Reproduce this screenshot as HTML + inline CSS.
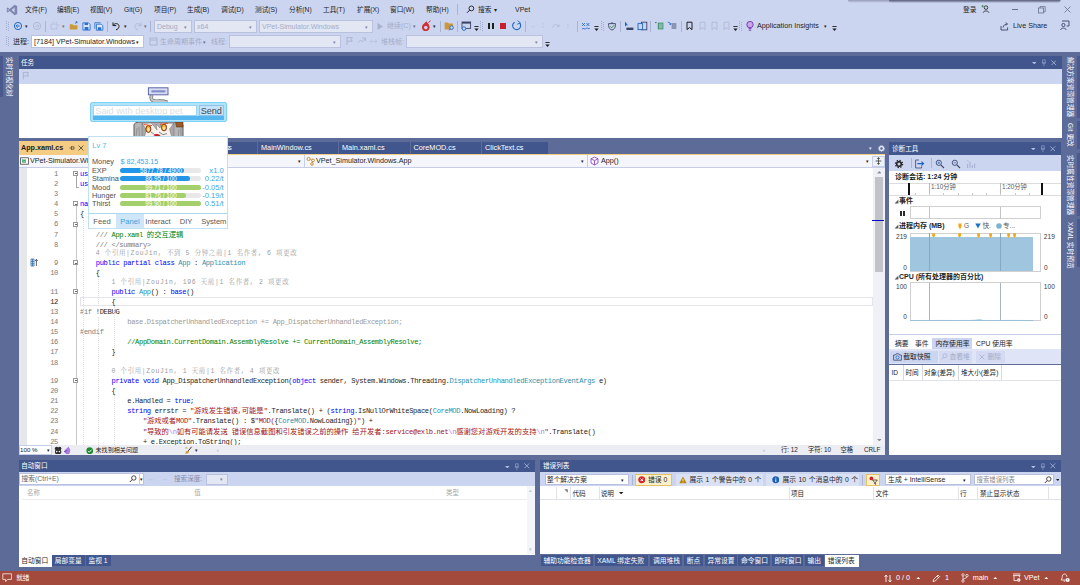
<!DOCTYPE html>
<html lang="zh-CN"><head><meta charset="utf-8"><title>VPet - Microsoft Visual Studio</title>
<style>
html,body{margin:0;padding:0;}
body{width:1080px;height:585px;overflow:hidden;position:relative;background:#5D6B99;font-family:"Liberation Sans","Noto Sans CJK SC",sans-serif;}
#r{position:absolute;left:0;top:0;width:1080px;height:585px;overflow:hidden;}
#r div,#r span,#r svg{position:absolute;}
#r span{white-space:nowrap;}
#r span span{position:static;}
.m{font-family:"Liberation Mono","Noto Sans CJK SC",monospace;}
.cl{font-family:"Liberation Mono","Noto Serif CJK SC",monospace;}
.b{font-weight:bold;}
.c{font-size:7.3px;letter-spacing:0;}
.in{color:#9a9a9a}
.v{writing-mode:vertical-rl;text-orientation:sideways;}
.k{color:#0000ff}.t{color:#2b91af}.g{color:#008000}.s{color:#a31515}.gr{color:#808080}.e{color:#b776fb}
</style></head>
<body><div id="r">
<div style="left:0px;top:0px;width:1080px;height:52px;background:#CCD5F0;"></div>
<svg style="left:6px;top:4px;" width="12" height="12" viewBox="0 0 12 12"><path d="M8.6 0.8 L11.2 2 V10 L8.6 11.2 L3.6 6.9 L1.6 8.5 L0.8 8 V4 L1.6 3.5 L3.6 5.1 Z M8.6 3.6 L5.6 6 L8.6 8.4 Z M1.8 4.9 V7.1 L3 6 Z" fill="#7f87ae" fill-rule="evenodd"/></svg>
<span style="left:25px;top:4.50px;line-height:10px;font-size:6.7px;color:#1e1e1e;">文件(F)</span>
<span style="left:57px;top:4.50px;line-height:10px;font-size:6.7px;color:#1e1e1e;">编辑(E)</span>
<span style="left:90px;top:4.50px;line-height:10px;font-size:6.7px;color:#1e1e1e;">视图(V)</span>
<span style="left:124px;top:4.50px;line-height:10px;font-size:6.7px;color:#1e1e1e;">Git(G)</span>
<span style="left:154px;top:4.50px;line-height:10px;font-size:6.7px;color:#1e1e1e;">项目(P)</span>
<span style="left:187px;top:4.50px;line-height:10px;font-size:6.7px;color:#1e1e1e;">生成(B)</span>
<span style="left:221px;top:4.50px;line-height:10px;font-size:6.7px;color:#1e1e1e;">调试(D)</span>
<span style="left:255px;top:4.50px;line-height:10px;font-size:6.7px;color:#1e1e1e;">测试(S)</span>
<span style="left:289px;top:4.50px;line-height:10px;font-size:6.7px;color:#1e1e1e;">分析(N)</span>
<span style="left:323px;top:4.50px;line-height:10px;font-size:6.7px;color:#1e1e1e;">工具(T)</span>
<span style="left:357px;top:4.50px;line-height:10px;font-size:6.7px;color:#1e1e1e;">扩展(X)</span>
<span style="left:390px;top:4.50px;line-height:10px;font-size:6.7px;color:#1e1e1e;">窗口(W)</span>
<span style="left:426px;top:4.50px;line-height:10px;font-size:6.7px;color:#1e1e1e;">帮助(H)</span>
<div style="left:457px;top:4px;width:1px;height:11px;background:#aab3d3;"></div>
<svg style="left:466px;top:5px;" width="9" height="9" viewBox="0 0 9 9"><circle cx="5.4" cy="3.4" r="2.4" fill="none" stroke="#1e1e1e" stroke-width="0.9"/><path d="M3.7 5.1 L1 7.8" stroke="#1e1e1e" stroke-width="1"/></svg>
<span style="left:478px;top:4.50px;line-height:10px;font-size:6.7px;color:#1e1e1e;">搜索</span>
<span style="left:494px;top:4.50px;line-height:10px;font-size:6px;color:#1e1e1e;">▾</span>
<span style="left:515px;top:4.50px;line-height:10px;font-size:7px;color:#1e1e1e;">VPet</span>
<span style="left:963px;top:4.50px;line-height:10px;font-size:6.7px;color:#1e1e1e;">登录</span>
<svg style="left:981px;top:4px;" width="10" height="10" viewBox="0 0 10 10"><circle cx="5" cy="3.6" r="1.8" fill="none" stroke="#1e1e1e" stroke-width="0.8"/><path d="M2.2 8.6 C2.6 6.4 7.4 6.4 7.8 8.6" fill="none" stroke="#1e1e1e" stroke-width="0.8"/><path d="M1.6 1 V3.4 M0.4 2.2 H2.8" stroke="#2a8a2a" stroke-width="0.7"/></svg>
<div style="left:1012px;top:9px;width:6px;height:1px;background:#6a7088;"></div>
<svg style="left:1038px;top:6px;" width="8" height="8" viewBox="0 0 8 8"><rect x="0.5" y="2" width="5" height="5" fill="none" stroke="#6a7088" stroke-width="0.8"/><path d="M2 2 V0.6 H7.2 V5.8 H5.6" fill="none" stroke="#6a7088" stroke-width="0.8"/></svg>
<svg style="left:1064px;top:6px;" width="7" height="7" viewBox="0 0 7 7"><path d="M0.5 0.5 L6.5 6.5 M6.5 0.5 L0.5 6.5" stroke="#6a7088" stroke-width="0.8"/></svg>
<div style="left:848px;top:0px;width:213px;height:3.4px;background:linear-gradient(to bottom,rgba(70,74,100,0.42),rgba(70,74,100,0));border-radius:0 0 3px 3px;"></div>
<div style="left:889px;top:0px;width:171px;height:3.2px;background:linear-gradient(to bottom,rgba(50,54,80,0.6),rgba(60,64,90,0));border-radius:0 0 3px 3px;"></div>
<div style="left:6px;top:21px;width:1px;height:1px;background:#a3add2;"></div>
<div style="left:7.5px;top:22px;width:1px;height:1px;background:#a3add2;"></div>
<div style="left:6px;top:23px;width:1px;height:1px;background:#a3add2;"></div>
<div style="left:7.5px;top:24px;width:1px;height:1px;background:#a3add2;"></div>
<div style="left:6px;top:25px;width:1px;height:1px;background:#a3add2;"></div>
<div style="left:7.5px;top:26px;width:1px;height:1px;background:#a3add2;"></div>
<div style="left:6px;top:27px;width:1px;height:1px;background:#a3add2;"></div>
<div style="left:7.5px;top:28px;width:1px;height:1px;background:#a3add2;"></div>
<div style="left:6px;top:29px;width:1px;height:1px;background:#a3add2;"></div>
<div style="left:7.5px;top:30px;width:1px;height:1px;background:#a3add2;"></div>
<svg style="left:13px;top:21px;" width="10" height="10" viewBox="0 0 10 10"><circle cx="5" cy="5" r="3.6" fill="none" stroke="#1a66c8" stroke-width="1"/><path d="M6.8 5 H3.4 M4.8 3.4 L3.2 5 L4.8 6.6" fill="none" stroke="#1a66c8" stroke-width="0.9"/></svg>
<span style="left:25px;top:21.00px;line-height:10px;font-size:5px;color:#1e1e1e;">▾</span>
<svg style="left:32px;top:21px;" width="10" height="10" viewBox="0 0 10 10"><circle cx="5" cy="5" r="3.6" fill="none" stroke="#b0b8d6" stroke-width="1"/><path d="M3.2 5 H6.6 M5.2 3.4 L6.8 5 L5.2 6.6" fill="none" stroke="#b0b8d6" stroke-width="0.9"/></svg>
<div style="left:45px;top:21px;width:1px;height:11px;background:#aab3d3;"></div>
<svg style="left:50px;top:21px;" width="12" height="10" viewBox="0 0 12 10"><path d="M1 3 H7 V8 H1 Z M3 2 L4 0.5 M6 2 L7.5 1 M8 4 H10" fill="none" stroke="#b3bbd8" stroke-width="0.9"/></svg>
<span style="left:62px;top:21.00px;line-height:10px;font-size:5px;color:#6a7088;">▾</span>
<svg style="left:69px;top:21px;" width="10" height="10" viewBox="0 0 10 10"><path d="M0.8 8.5 V3.2 H3.4 L4.2 4.2 H8.4 V8.5 Z" fill="#c99a3c"/><path d="M6 2.6 L8 0.8 M8 0.8 H6.6 M8 0.8 V2.2" stroke="#1a66c8" stroke-width="0.8" fill="none"/></svg>
<svg style="left:81.5px;top:21.5px;" width="9" height="9" viewBox="0 0 9 9"><path d="M0.9 0.9 H6.6 L8.1 2.4 V8.1 H0.9 Z" fill="#dfe8fa" stroke="#2a72cc" stroke-width="0.9"/><rect x="2.6" y="0.9" width="3.4" height="2.2" fill="#2a72cc"/><rect x="2.6" y="5" width="3.8" height="3" fill="#2a72cc"/></svg>
<svg style="left:93.5px;top:21.5px;" width="10" height="9" viewBox="0 0 10 9"><path d="M2.4 2.2 H7.4 L8.8 3.6 V8.2 H2.4 Z" fill="#dfe8fa" stroke="#2a72cc" stroke-width="0.9"/><path d="M0.8 6.8 V0.7 H6.6" fill="none" stroke="#2a72cc" stroke-width="0.8"/><rect x="3.8" y="5.2" width="3.4" height="2.8" fill="#2a72cc"/></svg>
<div style="left:107px;top:21px;width:1px;height:11px;background:#aab3d3;"></div>
<svg style="left:111px;top:21px;" width="10" height="10" viewBox="0 0 10 10"><path d="M2 1.4 V4.6 H5.2" fill="none" stroke="#1e1e1e" stroke-width="1"/><path d="M2.2 4.4 C3.6 1.6 8.4 2.2 8 5.6 C7.8 7.4 6.6 8.4 5 8.8" fill="none" stroke="#1e1e1e" stroke-width="1"/></svg>
<span style="left:124px;top:21.00px;line-height:10px;font-size:5px;color:#1e1e1e;">▾</span>
<svg style="left:133px;top:21px;" width="10" height="10" viewBox="0 0 10 10"><path d="M8 1.4 V4.6 H4.8" fill="none" stroke="#b3bbd8" stroke-width="1"/><path d="M7.8 4.4 C6.4 1.6 1.6 2.2 2 5.6 C2.2 7.4 3.4 8.4 5 8.8" fill="none" stroke="#b3bbd8" stroke-width="1"/></svg>
<span style="left:144px;top:21.00px;line-height:10px;font-size:5px;color:#6a7088;">▾</span>
<div style="left:150px;top:21px;width:1px;height:11px;background:#aab3d3;"></div>
<div style="left:154px;top:20px;width:38px;height:13px;background:#e3e7f4;border:1px solid #b9c1de;box-sizing:border-box;"></div>
<span style="left:157px;top:21.50px;line-height:10px;font-size:7px;color:#a4acc4;">Debug</span>
<span style="left:184px;top:21.50px;line-height:10px;font-size:5px;color:#8088a4;">▾</span>
<div style="left:194px;top:20px;width:63px;height:13px;background:#e3e7f4;border:1px solid #b9c1de;box-sizing:border-box;"></div>
<span style="left:197px;top:21.50px;line-height:10px;font-size:7px;color:#a4acc4;">x64</span>
<span style="left:249px;top:21.50px;line-height:10px;font-size:5px;color:#8088a4;">▾</span>
<div style="left:259px;top:20px;width:114px;height:13px;background:#e3e7f4;border:1px solid #b9c1de;box-sizing:border-box;"></div>
<span style="left:262px;top:21.50px;line-height:10px;font-size:7px;color:#a4acc4;">VPet-Simulator.Windows</span>
<span style="left:365px;top:21.50px;line-height:10px;font-size:5px;color:#8088a4;">▾</span>
<svg style="left:376px;top:22px;" width="8" height="9" viewBox="0 0 8 9"><path d="M1.5 1 L7 4.5 L1.5 8 Z" fill="#a9b1cd"/></svg>
<span style="left:387px;top:21.00px;line-height:10px;font-size:7px;color:#a4acc4;">继续(C)</span>
<span style="left:413px;top:21.00px;line-height:10px;font-size:5px;color:#6a7088;">▾</span>
<svg style="left:420px;top:20px;" width="12" height="12" viewBox="0 0 12 12"><path d="M2 7.4 C2 4 5 3.6 6.4 1 C6.8 3 9.8 4.2 9.6 7.4 C9.4 10 7.4 11 5.8 11 C3.8 11 2 9.8 2 7.4 Z" fill="#d12f2f"/><circle cx="5.8" cy="7.6" r="1.8" fill="#CCD5F0"/><path d="M8.4 2.6 L10.6 0.8" stroke="#d12f2f" stroke-width="1"/></svg>
<span style="left:433px;top:21.00px;line-height:10px;font-size:5px;color:#1e1e1e;">▾</span>
<div style="left:440px;top:21px;width:1px;height:11px;background:#aab3d3;"></div>
<svg style="left:444px;top:21px;" width="11" height="10" viewBox="0 0 11 10"><path d="M0.6 8.4 V1.6 H4 L4.8 2.6 H9 V8.4 Z" fill="#c99a3c"/><circle cx="7.6" cy="6.6" r="1.8" fill="#CCD5F0" stroke="#1a66c8" stroke-width="0.9"/><path d="M6.2 8 L5 9.4" stroke="#1a66c8" stroke-width="0.9"/></svg>
<div style="left:457px;top:21px;width:1px;height:11px;background:#aab3d3;"></div>
<svg style="left:461px;top:21px;" width="11" height="10" viewBox="0 0 11 10"><rect x="1" y="1" width="8.6" height="6.4" fill="none" stroke="#3b4468" stroke-width="0.9"/><rect x="1" y="1" width="8.6" height="1.6" fill="#3b4468"/><circle cx="3" cy="7.6" r="1.8" fill="#CCD5F0" stroke="#1a66c8" stroke-width="0.9"/></svg>
<svg style="left:474px;top:26px;" width="5" height="6" viewBox="0 0 5 6"><path d="M0.4 0.5 H4.6" stroke="#1e1e1e" stroke-width="0.9"/><path d="M0.3 2.6 H4.7 L2.5 5 Z" fill="#1e1e1e"/></svg>
<div style="left:480px;top:21px;width:1px;height:1px;background:#a3add2;"></div>
<div style="left:481.5px;top:22px;width:1px;height:1px;background:#a3add2;"></div>
<div style="left:480px;top:23px;width:1px;height:1px;background:#a3add2;"></div>
<div style="left:481.5px;top:24px;width:1px;height:1px;background:#a3add2;"></div>
<div style="left:480px;top:25px;width:1px;height:1px;background:#a3add2;"></div>
<div style="left:481.5px;top:26px;width:1px;height:1px;background:#a3add2;"></div>
<div style="left:480px;top:27px;width:1px;height:1px;background:#a3add2;"></div>
<div style="left:481.5px;top:28px;width:1px;height:1px;background:#a3add2;"></div>
<div style="left:480px;top:29px;width:1px;height:1px;background:#a3add2;"></div>
<div style="left:481.5px;top:30px;width:1px;height:1px;background:#a3add2;"></div>
<div style="left:488px;top:23.2px;width:1.7px;height:6px;background:#1e1e1e;"></div>
<div style="left:492px;top:23.2px;width:1.7px;height:6px;background:#1e1e1e;"></div>
<div style="left:500px;top:23.3px;width:6.4px;height:6.2px;background:#c8202c;"></div>
<svg style="left:511px;top:20px;" width="11" height="11" viewBox="0 0 11 11"><path d="M8.8 3.2 A4 4 0 1 1 3.6 2.2" fill="none" stroke="#1a66c8" stroke-width="1.1"/><path d="M6.6 0.6 L9.4 3 L6.2 4.2" fill="none" stroke="#1a66c8" stroke-width="0.9"/></svg>
<div style="left:525px;top:21px;width:1px;height:11px;background:#aab3d3;"></div>
<span style="left:529px;top:21.00px;line-height:10px;font-size:7px;color:#b3bbd8;">→</span>
<span style="left:542px;top:21.00px;line-height:10px;font-size:7px;color:#b3bbd8;">⁞</span>
<svg style="left:551px;top:21px;" width="10" height="10" viewBox="0 0 10 10"><path d="M1.6 6.6 C2 3 7 2.6 8 5.6 M8 5.6 L8.4 3.6 M8 5.6 L6 5.2" fill="none" stroke="#b3bbd8" stroke-width="0.9"/></svg>
<span style="left:566px;top:21.00px;line-height:10px;font-size:7px;color:#b3bbd8;">↕</span>
<div style="left:577px;top:21px;width:1px;height:11px;background:#aab3d3;"></div>
<svg style="left:581px;top:21px;" width="10" height="10" viewBox="0 0 10 10"><path d="M1 2 L4 5 M4 2 L1 5 M5.4 2 L8.4 5 M8.4 2 L5.4 5" stroke="#1a66c8" stroke-width="0.8"/><path d="M1 8 C2.4 6.2 3.8 9.2 5.2 7.4 C6.4 6 7.6 8.8 8.8 7.4" fill="none" stroke="#1a66c8" stroke-width="0.8"/></svg>
<svg style="left:594px;top:26px;" width="5" height="6" viewBox="0 0 5 6"><path d="M0.4 0.5 H4.6" stroke="#1e1e1e" stroke-width="0.9"/><path d="M0.3 2.6 H4.7 L2.5 5 Z" fill="#1e1e1e"/></svg>
<div style="left:601px;top:21px;width:1px;height:1px;background:#a3add2;"></div>
<div style="left:602.5px;top:22px;width:1px;height:1px;background:#a3add2;"></div>
<div style="left:601px;top:23px;width:1px;height:1px;background:#a3add2;"></div>
<div style="left:602.5px;top:24px;width:1px;height:1px;background:#a3add2;"></div>
<div style="left:601px;top:25px;width:1px;height:1px;background:#a3add2;"></div>
<div style="left:602.5px;top:26px;width:1px;height:1px;background:#a3add2;"></div>
<div style="left:601px;top:27px;width:1px;height:1px;background:#a3add2;"></div>
<div style="left:602.5px;top:28px;width:1px;height:1px;background:#a3add2;"></div>
<div style="left:601px;top:29px;width:1px;height:1px;background:#a3add2;"></div>
<div style="left:602.5px;top:30px;width:1px;height:1px;background:#a3add2;"></div>
<svg style="left:607px;top:21px;" width="10" height="10" viewBox="0 0 10 10"><path d="M1.6 2.6 H8.4 V4.4 C8.4 7 6.6 8.6 5 9 C3.4 8.6 1.6 7 1.6 4.4 Z" fill="none" stroke="#3b4468" stroke-width="0.9"/><path d="M3.4 5.4 L4.8 6.8 L7 4.2" fill="none" stroke="#2a8a2a" stroke-width="0.9"/><path d="M5 1 V2.6" stroke="#3b4468" stroke-width="0.9"/></svg>
<div style="left:620px;top:21px;width:1px;height:11px;background:#aab3d3;"></div>
<svg style="left:624px;top:21px;" width="11" height="10" viewBox="0 0 11 10"><path d="M1 0.6 L4 4.2 L2.4 4.2 L1 5.6 Z" fill="#1a66c8"/><rect x="2.4" y="6.6" width="7" height="2.4" fill="#3b4468"/></svg>
<svg style="left:637px;top:21px;" width="11" height="10" viewBox="0 0 11 10"><rect x="4.4" y="1.2" width="5.4" height="7.6" fill="none" stroke="#3b4468" stroke-width="0.9"/><rect x="1" y="2.6" width="4.6" height="6" fill="#CCD5F0" stroke="#1a66c8" stroke-width="0.9"/></svg>
<div style="left:650px;top:21px;width:1px;height:11px;background:#aab3d3;"></div>
<svg style="left:654px;top:21px;" width="11" height="10" viewBox="0 0 11 10"><path d="M3.6 3 H9 M3.6 5 H9 M3.6 7 H9" stroke="#2f8f5b" stroke-width="0.9"/><path d="M1 1.6 H2.6" stroke="#3b4468" stroke-width="0.8"/><rect x="4.4" y="2" width="4.6" height="6" fill="none" stroke="#2f8f5b" stroke-width="0.7"/></svg>
<svg style="left:667px;top:21px;" width="11" height="10" viewBox="0 0 11 10"><path d="M4.6 3 H9.4 M4.6 5 H9.4 M4.6 7 H9.4" stroke="#3b4468" stroke-width="0.9"/><path d="M0.8 1.4 C2.4 1 3.6 2 3.6 3.6 M3.6 3.6 L2.2 3 M3.6 3.6 L4 2.2" fill="none" stroke="#1a66c8" stroke-width="0.8"/></svg>
<div style="left:681px;top:21px;width:1px;height:11px;background:#aab3d3;"></div>
<svg style="left:685px;top:21px;" width="9" height="10" viewBox="0 0 9 10"><path d="M2 1.2 H7 V8.6 L4.5 6.6 L2 8.6 Z" fill="none" stroke="#1e1e1e" stroke-width="1"/></svg>
<svg style="left:698px;top:21px;" width="9" height="10" viewBox="0 0 9 10"><path d="M2 1.2 H7 V8.6 L4.5 6.6 L2 8.6 Z" fill="none" stroke="#b3bbd8" stroke-width="1"/></svg>
<svg style="left:710px;top:21px;" width="9" height="10" viewBox="0 0 9 10"><path d="M2 1.2 H7 V8.6 L4.5 6.6 L2 8.6 Z" fill="none" stroke="#b3bbd8" stroke-width="1"/></svg>
<svg style="left:722px;top:21px;" width="9" height="10" viewBox="0 0 9 10"><path d="M2 1.2 H7 V8.6 L4.5 6.6 L2 8.6 Z" fill="none" stroke="#b3bbd8" stroke-width="1"/></svg>
<svg style="left:733px;top:26px;" width="5" height="6" viewBox="0 0 5 6"><path d="M0.4 0.5 H4.6" stroke="#1e1e1e" stroke-width="0.9"/><path d="M0.3 2.6 H4.7 L2.5 5 Z" fill="#1e1e1e"/></svg>
<div style="left:739px;top:21px;width:1px;height:1px;background:#a3add2;"></div>
<div style="left:740.5px;top:22px;width:1px;height:1px;background:#a3add2;"></div>
<div style="left:739px;top:23px;width:1px;height:1px;background:#a3add2;"></div>
<div style="left:740.5px;top:24px;width:1px;height:1px;background:#a3add2;"></div>
<div style="left:739px;top:25px;width:1px;height:1px;background:#a3add2;"></div>
<div style="left:740.5px;top:26px;width:1px;height:1px;background:#a3add2;"></div>
<div style="left:739px;top:27px;width:1px;height:1px;background:#a3add2;"></div>
<div style="left:740.5px;top:28px;width:1px;height:1px;background:#a3add2;"></div>
<div style="left:739px;top:29px;width:1px;height:1px;background:#a3add2;"></div>
<div style="left:740.5px;top:30px;width:1px;height:1px;background:#a3add2;"></div>
<svg style="left:745px;top:20px;" width="10" height="12" viewBox="0 0 10 12"><circle cx="5" cy="4.6" r="3.2" fill="#c9a6e8" stroke="#7a3fb0" stroke-width="1"/><path d="M3.6 8.6 H6.4 M3.8 10.2 H6.2" stroke="#7a3fb0" stroke-width="1"/></svg>
<span style="left:757px;top:21.00px;line-height:10px;font-size:7.2px;color:#1e1e1e;">Application Insights</span>
<span style="left:824px;top:21.00px;line-height:10px;font-size:5px;color:#1e1e1e;">▾</span>
<svg style="left:832px;top:26px;" width="5" height="6" viewBox="0 0 5 6"><path d="M0.4 0.5 H4.6" stroke="#1e1e1e" stroke-width="0.9"/><path d="M0.3 2.6 H4.7 L2.5 5 Z" fill="#1e1e1e"/></svg>
<svg style="left:1000px;top:21px;" width="10" height="10" viewBox="0 0 10 10"><path d="M1 5 V9 H7.6 V6.4" fill="none" stroke="#3b4468" stroke-width="0.9"/><path d="M3 6.6 C3.4 4 5.4 3 7.4 3 M7.4 3 L5.8 1.4 M7.4 3 L5.8 4.6" fill="none" stroke="#3b4468" stroke-width="0.9"/></svg>
<span style="left:1013px;top:21.00px;line-height:10px;font-size:7.2px;color:#1e1e1e;">Live Share</span>
<svg style="left:1059px;top:20px;" width="11" height="11" viewBox="0 0 11 11"><path d="M3 1 H10 V6 H7.6" fill="none" stroke="#3b4468" stroke-width="0.9"/><circle cx="4.4" cy="5" r="1.6" fill="none" stroke="#3b4468" stroke-width="0.9"/><path d="M1.6 10 C2 7.4 6.8 7.4 7.2 10" fill="none" stroke="#3b4468" stroke-width="0.9"/></svg>
<div style="left:6px;top:36px;width:1px;height:1px;background:#a3add2;"></div>
<div style="left:7.5px;top:37px;width:1px;height:1px;background:#a3add2;"></div>
<div style="left:6px;top:38px;width:1px;height:1px;background:#a3add2;"></div>
<div style="left:7.5px;top:39px;width:1px;height:1px;background:#a3add2;"></div>
<div style="left:6px;top:40px;width:1px;height:1px;background:#a3add2;"></div>
<div style="left:7.5px;top:41px;width:1px;height:1px;background:#a3add2;"></div>
<div style="left:6px;top:42px;width:1px;height:1px;background:#a3add2;"></div>
<div style="left:7.5px;top:43px;width:1px;height:1px;background:#a3add2;"></div>
<div style="left:6px;top:44px;width:1px;height:1px;background:#a3add2;"></div>
<div style="left:7.5px;top:45px;width:1px;height:1px;background:#a3add2;"></div>
<span style="left:13px;top:36.50px;line-height:10px;font-size:7px;color:#1e1e1e;">进程:</span>
<div style="left:31px;top:35px;width:113px;height:13px;background:#fff;border:1px solid #b9c1de;box-sizing:border-box;"></div>
<span style="left:34px;top:36.50px;line-height:10px;font-size:7.2px;color:#1e1e1e;">[7184] VPet-Simulator.Windows</span>
<span style="left:136px;top:36.50px;line-height:10px;font-size:5px;color:#1e1e1e;">▾</span>
<svg style="left:149px;top:37px;" width="9" height="9" viewBox="0 0 9 9"><rect x="1" y="1" width="7" height="7" fill="none" stroke="#a9b1cd" stroke-width="0.9"/><path d="M1 3 H8" stroke="#a9b1cd" stroke-width="0.9"/></svg>
<span style="left:160px;top:36.50px;line-height:10px;font-size:7px;color:#a4acc4;">生命周期事件</span>
<span style="left:203px;top:36.50px;line-height:10px;font-size:5px;color:#6a7088;">▾</span>
<span style="left:211px;top:36.50px;line-height:10px;font-size:7px;color:#a4acc4;">线程:</span>
<div style="left:229px;top:35px;width:112px;height:13px;background:#e3e7f4;border:1px solid #b9c1de;box-sizing:border-box;"></div>
<span style="left:333px;top:36.50px;line-height:10px;font-size:5px;color:#8088a4;">▾</span>
<svg style="left:345px;top:36px;" width="9" height="10" viewBox="0 0 9 10"><path d="M2 1 V9 M2 1.6 H7.4 L6 3.4 L7.4 5.2 H2" fill="none" stroke="#a9b1cd" stroke-width="0.9"/></svg>
<svg style="left:357px;top:36px;" width="10" height="10" viewBox="0 0 10 10"><path d="M1 6.6 L3.4 4.2 L5 5.8 L7.6 3 M5.4 2 H8.4 V5" fill="none" stroke="#a9b1cd" stroke-width="0.9"/></svg>
<svg style="left:369px;top:37px;" width="9" height="9" viewBox="0 0 9 9"><path d="M1 4.5 H8 M3 2.6 L1 4.5 L3 6.4 M6 2.6 L8 4.5 L6 6.4" fill="none" stroke="#b9c1de" stroke-width="0.8"/></svg>
<span style="left:381px;top:36.50px;line-height:10px;font-size:7px;color:#a4acc4;">堆栈帧:</span>
<div style="left:406px;top:35px;width:137px;height:13px;background:#e3e7f4;border:1px solid #b9c1de;box-sizing:border-box;"></div>
<span style="left:535px;top:36.50px;line-height:10px;font-size:5px;color:#8088a4;">▾</span>
<svg style="left:545px;top:41.5px;" width="5" height="6" viewBox="0 0 5 6"><path d="M0.4 0.5 H4.6" stroke="#1e1e1e" stroke-width="0.9"/><path d="M0.3 2.6 H4.7 L2.5 5 Z" fill="#1e1e1e"/></svg>
<div style="left:0px;top:52px;width:1080px;height:518px;background:#5D6B99;"></div>
<div style="left:0px;top:56px;width:3.3px;height:41px;background:#4a5a8e;"></div>
<span class="v" style="left:5px;top:-5.00px;line-height:10px;font-size:6.7px;color:#fff;top:56.5px;line-height:9px;letter-spacing:-0.15px;">实时可视化树</span>
<div style="left:1076.5px;top:56px;width:3.5px;height:62px;background:#4a5a8e;"></div>
<span class="v" style="left:1066px;top:-5.00px;line-height:10px;font-size:6.7px;color:#fff;top:56.5px;line-height:9px;">解决方案资源管理器</span>
<div style="left:1076.5px;top:121px;width:3.5px;height:28px;background:#4a5a8e;"></div>
<span class="v" style="left:1066px;top:-5.00px;line-height:10px;font-size:6.7px;color:#fff;top:123px;line-height:9px;">Git 更改</span>
<div style="left:1076.5px;top:152.5px;width:3.5px;height:63px;background:#4a5a8e;"></div>
<span class="v" style="left:1066px;top:-5.00px;line-height:10px;font-size:6.7px;color:#fff;top:154.5px;line-height:9px;">实时属性资源管理器</span>
<div style="left:1076.5px;top:219px;width:3.5px;height:48px;background:#4a5a8e;"></div>
<span class="v" style="left:1066px;top:-5.00px;line-height:10px;font-size:6.7px;color:#fff;top:221.5px;line-height:9px;">XAML 实时预览</span>
<div style="left:18.5px;top:56px;width:1043px;height:13px;background:#40568D;"></div>
<span style="left:21px;top:57.50px;line-height:10px;font-size:6.6px;color:#fff;">任务</span>
<svg style="left:1031.9px;top:61.9px;" width="4.6" height="2.4" viewBox="0 0 4.6 2.4"><path d="M0 0 H4.6 L2.3 2.4 Z" fill="#b4bedf"/></svg>
<svg style="left:1040.5px;top:58.9px;" width="6" height="8" viewBox="0 0 6 8"><path d="M1.6 0.8 H4.2 V4 H1.6 Z M0.8 4 H5 M2.9 4 V7.2" fill="none" stroke="#94a1cc" stroke-width="0.7"/></svg>
<svg style="left:1050.9px;top:59.6px;" width="5.6" height="5.6" viewBox="0 0 5.6 5.6"><path d="M0.4 0.4 L5.2 5.2 M5.2 0.4 L0.4 5.2" stroke="#b4bedf" stroke-width="0.75"/></svg>
<div style="left:18.5px;top:69px;width:1043px;height:14.5px;background:#CCD5F0;"></div>
<svg style="left:22px;top:71px;" width="8" height="9" viewBox="0 0 8 9"><path d="M1.4 1 V8.4 M1.4 1.4 H6.6 L5.4 3.2 L6.6 5 H1.4" fill="none" stroke="#a9b1cd" stroke-width="0.9"/></svg>
<div style="left:18.5px;top:83.5px;width:1043px;height:54px;background:#fff;"></div>
<div style="left:18.5px;top:141px;width:69.5px;height:14px;background:#F5CC84;"></div>
<span class="b" style="left:21px;top:143.00px;line-height:10px;font-size:7.2px;color:#1e1e1e;">App.xaml.cs</span>
<svg style="left:69px;top:145px;" width="6" height="7" viewBox="0 0 6 7"><path d="M0.5 3 H2.4 M2.4 1.2 V4.8 M2.4 1.8 H5 V4.2 H2.4" fill="none" stroke="#3b3b3b" stroke-width="0.7"/></svg>
<svg style="left:78px;top:145px;" width="6" height="6" viewBox="0 0 6 6"><path d="M0.6 0.6 L5.4 5.4 M5.4 0.6 L0.6 5.4" stroke="#3b3b3b" stroke-width="0.8"/></svg>
<div style="left:88px;top:142px;width:70px;height:12px;background:#40568D;"></div>
<span style="left:91px;top:143.00px;line-height:10px;font-size:7.3px;color:#fff;">winSetting.xaml.cs</span>
<div style="left:159px;top:142px;width:98px;height:12px;background:#40568D;"></div>
<span style="left:162px;top:143.00px;line-height:10px;font-size:7.3px;color:#fff;">MessageBar.xaml.cs</span>
<span style="left:228.3px;top:143.00px;line-height:10px;font-size:7px;color:#fff;">s</span>
<div style="left:258px;top:142px;width:80px;height:12px;background:#40568D;"></div>
<span style="left:261px;top:143.00px;line-height:10px;font-size:7.3px;color:#fff;">MainWindow.cs</span>
<div style="left:339px;top:142px;width:70.5px;height:12px;background:#40568D;"></div>
<span style="left:342px;top:143.00px;line-height:10px;font-size:7.3px;color:#fff;">Main.xaml.cs</span>
<div style="left:410.5px;top:142px;width:70.5px;height:12px;background:#40568D;"></div>
<span style="left:413.5px;top:143.00px;line-height:10px;font-size:7.3px;color:#fff;">CoreMOD.cs</span>
<div style="left:482px;top:142px;width:66px;height:12px;background:#40568D;"></div>
<span style="left:485px;top:143.00px;line-height:10px;font-size:7.3px;color:#fff;">ClickText.cs</span>
<span style="left:869px;top:143.00px;line-height:10px;font-size:5px;color:#dfe4f4;">▾</span>
<svg style="left:878px;top:145px;" width="7" height="7" viewBox="0 0 7 7"><circle cx="3.5" cy="3.5" r="2" fill="none" stroke="#dfe4f4" stroke-width="1.4"/><circle cx="3.5" cy="3.5" r="3" fill="none" stroke="#dfe4f4" stroke-width="0.8" stroke-dasharray="1 1"/></svg>
<div style="left:18.5px;top:154px;width:866.5px;height:1px;background:#F5CC84;"></div>
<div style="left:18.5px;top:155px;width:866.5px;height:12.5px;background:#f4f6fc;"></div>
<div style="left:18.5px;top:167px;width:866.5px;height:1px;background:#c5cde8;"></div>
<svg style="left:20px;top:157px;" width="9" height="8" viewBox="0 0 9 8"><rect x="0.6" y="0.8" width="7.8" height="6.4" fill="#fff" stroke="#4a4a4a" stroke-width="0.8"/><rect x="2" y="2.4" width="4" height="3.2" fill="#3c9a4c"/><text x="2.4" y="5.4" font-size="3.4" fill="#fff" font-family="Liberation Sans,sans-serif">C#</text></svg>
<span style="left:30px;top:156.00px;line-height:10px;font-size:7.2px;color:#1e1e1e;">VPet-Simulator.Windows</span>
<span style="left:298px;top:156.00px;line-height:10px;font-size:5px;color:#1e1e1e;">▾</span>
<div style="left:304px;top:155px;width:1px;height:12px;background:#c5cde8;"></div>
<svg style="left:306px;top:156px;" width="10" height="10" viewBox="0 0 10 10"><circle cx="2.6" cy="3" r="1.6" fill="none" stroke="#c08a1e" stroke-width="0.9"/><circle cx="7" cy="4.4" r="1.4" fill="none" stroke="#c08a1e" stroke-width="0.9"/><circle cx="6" cy="8" r="1.3" fill="none" stroke="#c08a1e" stroke-width="0.9"/><path d="M4 3.4 L5.6 4 M6.6 5.8 L6.2 6.8" stroke="#c08a1e" stroke-width="0.8"/></svg>
<span style="left:316px;top:156.00px;line-height:10px;font-size:7.2px;color:#1e1e1e;">VPet_Simulator.Windows.App</span>
<span style="left:581px;top:156.00px;line-height:10px;font-size:5px;color:#1e1e1e;">▾</span>
<div style="left:587px;top:155px;width:1px;height:12px;background:#c5cde8;"></div>
<svg style="left:590px;top:156px;" width="9" height="10" viewBox="0 0 9 10"><path d="M4.5 1 L8 2.8 V7 L4.5 9 L1 7 V2.8 Z M1 2.8 L4.5 4.6 L8 2.8 M4.5 4.6 V9" fill="none" stroke="#8a3fc0" stroke-width="0.8"/></svg>
<span style="left:601px;top:156.00px;line-height:10px;font-size:7.2px;color:#1e1e1e;">App()</span>
<span style="left:866px;top:156.00px;line-height:10px;font-size:5px;color:#1e1e1e;">▾</span>
<div style="left:871.5px;top:155.5px;width:13px;height:11.5px;background:#eef1fa;border:1px solid #c5cde8;box-sizing:border-box;"></div>
<svg style="left:875px;top:157px;" width="7" height="8" viewBox="0 0 7 8"><path d="M3.5 0.6 V7.4 M0.6 4 H6.4 M2.2 2 L3.5 0.6 L4.8 2 M2.2 6 L3.5 7.4 L4.8 6" fill="none" stroke="#3b3b3b" stroke-width="0.8"/></svg>
<div style="left:18.5px;top:168px;width:866.5px;height:276.5px;background:#fff;"></div>
<div style="left:18.5px;top:168px;width:8.5px;height:277px;background:#e6e7e8;"></div>
<div style="left:75.6px;top:176px;width:0.8px;height:12px;background:#a8a8a8;"></div>
<div style="left:75.6px;top:187.4px;width:3.4px;height:0.8px;background:#a8a8a8;"></div>
<div style="left:75.6px;top:206px;width:0.8px;height:239px;background:#c8c8c8;"></div>
<div style="left:80px;top:296.6px;width:793px;height:9.6px;background:#fff;border:1px solid #e4e4ec;box-sizing:border-box;"></div>
<div style="left:873px;top:168px;width:12px;height:276.5px;background:#f0f1f6;"></div>
<div style="left:875px;top:177px;width:8px;height:94.5px;background:#c2c3c9;"></div>
<svg style="left:876.7px;top:171.3px;" width="4.6" height="2.4" viewBox="0 0 4.6 2.4"><path d="M0 2.4 L2.3 0 L4.6 2.4 Z" fill="#8a8e9c"/></svg>
<svg style="left:876.7px;top:438.6px;" width="4.6" height="2.4" viewBox="0 0 4.6 2.4"><path d="M0 0 H4.6 L2.3 2.4 Z" fill="#8a8e9c"/></svg>
<div style="left:872px;top:219.5px;width:12px;height:1px;background:#0000cd;"></div>
<span class="m" style="left:28px;width:30px;text-align:right;top:168.80px;line-height:10px;font-size:7.1px;letter-spacing:-0.326px;color:#7a7a7a;">1</span>
<span class="m" style="left:28px;width:30px;text-align:right;top:178.93px;line-height:10px;font-size:7.1px;letter-spacing:-0.326px;color:#7a7a7a;">2</span>
<span class="m" style="left:28px;width:30px;text-align:right;top:189.05px;line-height:10px;font-size:7.1px;letter-spacing:-0.326px;color:#7a7a7a;">3</span>
<span class="m" style="left:28px;width:30px;text-align:right;top:199.18px;line-height:10px;font-size:7.1px;letter-spacing:-0.326px;color:#7a7a7a;">4</span>
<span class="m" style="left:28px;width:30px;text-align:right;top:209.30px;line-height:10px;font-size:7.1px;letter-spacing:-0.326px;color:#7a7a7a;">5</span>
<span class="m" style="left:28px;width:30px;text-align:right;top:219.43px;line-height:10px;font-size:7.1px;letter-spacing:-0.326px;color:#7a7a7a;">6</span>
<span class="m" style="left:28px;width:30px;text-align:right;top:229.55px;line-height:10px;font-size:7.1px;letter-spacing:-0.326px;color:#7a7a7a;">7</span>
<span class="m" style="left:28px;width:30px;text-align:right;top:239.68px;line-height:10px;font-size:7.1px;letter-spacing:-0.326px;color:#7a7a7a;">8</span>
<span class="m" style="left:28px;width:30px;text-align:right;top:258.10px;line-height:10px;font-size:7.1px;letter-spacing:-0.326px;color:#7a7a7a;">9</span>
<span class="m" style="left:28px;width:30px;text-align:right;top:268.23px;line-height:10px;font-size:7.1px;letter-spacing:-0.326px;color:#7a7a7a;">10</span>
<span class="m" style="left:28px;width:30px;text-align:right;top:286.65px;line-height:10px;font-size:7.1px;letter-spacing:-0.326px;color:#7a7a7a;">11</span>
<span class="m" style="left:28px;width:30px;text-align:right;top:296.78px;line-height:10px;font-size:7.1px;letter-spacing:-0.326px;color:#1e1e1e;">12</span>
<span class="m" style="left:28px;width:30px;text-align:right;top:306.90px;line-height:10px;font-size:7.1px;letter-spacing:-0.326px;color:#7a7a7a;">13</span>
<span class="m" style="left:28px;width:30px;text-align:right;top:317.03px;line-height:10px;font-size:7.1px;letter-spacing:-0.326px;color:#7a7a7a;">14</span>
<span class="m" style="left:28px;width:30px;text-align:right;top:327.15px;line-height:10px;font-size:7.1px;letter-spacing:-0.326px;color:#7a7a7a;">15</span>
<span class="m" style="left:28px;width:30px;text-align:right;top:337.28px;line-height:10px;font-size:7.1px;letter-spacing:-0.326px;color:#7a7a7a;">16</span>
<span class="m" style="left:28px;width:30px;text-align:right;top:347.40px;line-height:10px;font-size:7.1px;letter-spacing:-0.326px;color:#7a7a7a;">17</span>
<span class="m" style="left:28px;width:30px;text-align:right;top:357.53px;line-height:10px;font-size:7.1px;letter-spacing:-0.326px;color:#7a7a7a;">18</span>
<span class="m" style="left:28px;width:30px;text-align:right;top:375.95px;line-height:10px;font-size:7.1px;letter-spacing:-0.326px;color:#7a7a7a;">19</span>
<span class="m" style="left:28px;width:30px;text-align:right;top:386.08px;line-height:10px;font-size:7.1px;letter-spacing:-0.326px;color:#7a7a7a;">20</span>
<span class="m" style="left:28px;width:30px;text-align:right;top:396.20px;line-height:10px;font-size:7.1px;letter-spacing:-0.326px;color:#7a7a7a;">21</span>
<span class="m" style="left:28px;width:30px;text-align:right;top:406.33px;line-height:10px;font-size:7.1px;letter-spacing:-0.326px;color:#7a7a7a;">22</span>
<span class="m" style="left:28px;width:30px;text-align:right;top:416.45px;line-height:10px;font-size:7.1px;letter-spacing:-0.326px;color:#7a7a7a;">23</span>
<span class="m" style="left:28px;width:30px;text-align:right;top:426.58px;line-height:10px;font-size:7.1px;letter-spacing:-0.326px;color:#7a7a7a;">24</span>
<span class="m" style="left:28px;width:30px;text-align:right;top:436.70px;line-height:10px;font-size:7.1px;letter-spacing:-0.326px;color:#7a7a7a;">25</span>
<span class="m" style="left:80.00px;top:168.80px;line-height:10px;font-size:7.1px;letter-spacing:-0.326px;color:#1e1e1e;"><span class="k">using</span> System;</span>
<span class="m" style="left:80.00px;top:178.93px;line-height:10px;font-size:7.1px;letter-spacing:-0.326px;color:#1e1e1e;"><span class="k">using</span> System.Windows;</span>
<span class="m" style="left:80.00px;top:199.18px;line-height:10px;font-size:7.1px;letter-spacing:-0.326px;color:#1e1e1e;"><span class="k">namespace</span> VPet_Simulator.Windows</span>
<span class="m" style="left:80.00px;top:209.30px;line-height:10px;font-size:7.1px;letter-spacing:-0.326px;color:#1e1e1e;">{</span>
<span class="m" style="left:95.74px;top:219.43px;line-height:10px;font-size:7.1px;letter-spacing:-0.326px;color:#1e1e1e;"><span class="gr">/// &lt;summary&gt;</span></span>
<span class="m" style="left:95.74px;top:229.55px;line-height:10px;font-size:7.1px;letter-spacing:-0.326px;color:#1e1e1e;"><span class="gr">/// </span><span class="g">App.xaml <span class="c">的交互逻辑</span></span></span>
<span class="m" style="left:95.74px;top:239.68px;line-height:10px;font-size:7.1px;letter-spacing:-0.326px;color:#1e1e1e;"><span class="gr">/// &lt;/summary&gt;</span></span>
<span class="cl" style="left:95.736px;top:249.38px;line-height:10px;font-size:6.4px;letter-spacing:0.7px;color:#9c9c9c;">4 个引用|ZouJin, 不到 5 分钟之前|1 名作者, 6 项更改</span>
<span class="m" style="left:95.74px;top:258.10px;line-height:10px;font-size:7.1px;letter-spacing:-0.326px;color:#1e1e1e;"><span class="k">public partial class</span> <span class="t">App</span> : <span class="t">Application</span></span>
<span class="m" style="left:95.74px;top:268.23px;line-height:10px;font-size:7.1px;letter-spacing:-0.326px;color:#1e1e1e;">{</span>
<span class="cl" style="left:111.47200000000001px;top:277.93px;line-height:10px;font-size:6.4px;letter-spacing:0.7px;color:#9c9c9c;">1 个引用|ZouJin, 196 天前|1 名作者, 2 项更改</span>
<span class="m" style="left:111.47px;top:286.65px;line-height:10px;font-size:7.1px;letter-spacing:-0.326px;color:#1e1e1e;"><span class="k">public</span> <span class="t">App</span>() : <span class="k">base</span>()</span>
<span class="m" style="left:111.47px;top:296.78px;line-height:10px;font-size:7.1px;letter-spacing:-0.326px;color:#1e1e1e;">{</span>
<span class="m" style="left:80.00px;top:306.90px;line-height:10px;font-size:7.1px;letter-spacing:-0.326px;color:#1e1e1e;"><span class="gr">#if</span> !DEBUG</span>
<span class="m" style="left:127.21px;top:317.03px;line-height:10px;font-size:7.1px;letter-spacing:-0.326px;color:#1e1e1e;"><span class="in">base.DispatcherUnhandledException += App_DispatcherUnhandledException;</span></span>
<span class="m" style="left:80.00px;top:327.15px;line-height:10px;font-size:7.1px;letter-spacing:-0.326px;color:#1e1e1e;"><span class="gr">#endif</span></span>
<span class="m" style="left:127.21px;top:337.28px;line-height:10px;font-size:7.1px;letter-spacing:-0.326px;color:#1e1e1e;"><span class="g">//AppDomain.CurrentDomain.AssemblyResolve += CurrentDomain_AssemblyResolve;</span></span>
<span class="m" style="left:111.47px;top:347.40px;line-height:10px;font-size:7.1px;letter-spacing:-0.326px;color:#1e1e1e;">}</span>
<span class="cl" style="left:111.47200000000001px;top:367.23px;line-height:10px;font-size:6.4px;letter-spacing:0.7px;color:#9c9c9c;">0 个引用|ZouJin, 1 天前|1 名作者, 4 项更改</span>
<span class="m" style="left:111.47px;top:375.95px;line-height:10px;font-size:7.1px;letter-spacing:-0.326px;color:#1e1e1e;"><span class="k">private void</span> App_DispatcherUnhandledException(<span class="k">object</span> sender, System.Windows.Threading.<span class="t">DispatcherUnhandledExceptionEventArgs</span> e)</span>
<span class="m" style="left:111.47px;top:386.08px;line-height:10px;font-size:7.1px;letter-spacing:-0.326px;color:#1e1e1e;">{</span>
<span class="m" style="left:127.21px;top:396.20px;line-height:10px;font-size:7.1px;letter-spacing:-0.326px;color:#1e1e1e;">e.Handled = <span class="k">true</span>;</span>
<span class="m" style="left:127.21px;top:406.33px;line-height:10px;font-size:7.1px;letter-spacing:-0.326px;color:#1e1e1e;"><span class="k">string</span> errstr = <span class="s">"<span class="c">游戏发生错误</span>,<span class="c">可能是</span>"</span>.Translate() + (<span class="k">string</span>.IsNullOrWhiteSpace(<span class="t">CoreMOD</span>.NowLoading) ?</span>
<span class="m" style="left:142.94px;top:416.45px;line-height:10px;font-size:7.1px;letter-spacing:-0.326px;color:#1e1e1e;"><span class="s">"<span class="c">游戏或者</span>MOD"</span>.Translate() : $<span class="s">"MOD(</span>{<span class="t">CoreMOD</span>.NowLoading}<span class="s">)"</span>) +</span>
<span class="m" style="left:142.94px;top:426.58px;line-height:10px;font-size:7.1px;letter-spacing:-0.326px;color:#1e1e1e;"><span class="s">"<span class="c">导致的</span></span><span class="e">\n</span><span class="s"><span class="c">如有可能请发送</span> <span class="c">错误信息截图和引发错误之前的操作</span> <span class="c">给开发者</span>:service@exlb.net</span><span class="e">\n</span><span class="s"><span class="c">感谢您对游戏开发的支持</span></span><span class="e">\n</span><span class="s">"</span>.Translate()</span>
<span class="m" style="left:142.94px;top:436.70px;line-height:10px;font-size:7.1px;letter-spacing:-0.326px;color:#1e1e1e;">+ e.Exception.ToString();</span>
<div style="left:73.4px;top:171.0px;width:5px;height:5px;background:#fff;border:0.7px solid #9a9a9a;box-sizing:border-box;"></div>
<div style="left:74.6px;top:173.20000000000002px;width:2.6px;height:0.6px;background:#6a6a6a;"></div>
<div style="left:73.4px;top:201.38px;width:5px;height:5px;background:#fff;border:0.7px solid #9a9a9a;box-sizing:border-box;"></div>
<div style="left:74.6px;top:203.58px;width:2.6px;height:0.6px;background:#6a6a6a;"></div>
<div style="left:73.4px;top:221.63px;width:5px;height:5px;background:#fff;border:0.7px solid #9a9a9a;box-sizing:border-box;"></div>
<div style="left:74.6px;top:223.83px;width:2.6px;height:0.6px;background:#6a6a6a;"></div>
<div style="left:73.4px;top:260.3px;width:5px;height:5px;background:#fff;border:0.7px solid #9a9a9a;box-sizing:border-box;"></div>
<div style="left:74.6px;top:262.5px;width:2.6px;height:0.6px;background:#6a6a6a;"></div>
<div style="left:73.4px;top:288.84999999999997px;width:5px;height:5px;background:#fff;border:0.7px solid #9a9a9a;box-sizing:border-box;"></div>
<div style="left:74.6px;top:291.04999999999995px;width:2.6px;height:0.6px;background:#6a6a6a;"></div>
<div style="left:73.4px;top:378.15px;width:5px;height:5px;background:#fff;border:0.7px solid #9a9a9a;box-sizing:border-box;"></div>
<div style="left:74.6px;top:380.34999999999997px;width:2.6px;height:0.6px;background:#6a6a6a;"></div>
<div style="left:82.5px;top:218px;width:0;height:227px;border-left:1px dotted #dedede;"></div>
<div style="left:98px;top:277px;width:0;height:29px;border-left:1px dotted #dedede;"></div>
<div style="left:98px;top:317px;width:0;height:128px;border-left:1px dotted #dedede;"></div>
<div style="left:114px;top:306px;width:0;height:50px;border-left:1px dotted #dedede;"></div>
<div style="left:114px;top:395px;width:0;height:50px;border-left:1px dotted #dedede;"></div>
<svg style="left:30px;top:258px;" width="9" height="9" viewBox="0 0 9 9"><path d="M1 1 H4 V8 H1 Z M2.5 1 V8 M1 3.4 H4 M1 5.8 H4" fill="none" stroke="#2f6fb0" stroke-width="0.8"/><path d="M6.4 8 V1.6 M5 3 L6.4 1.4 L7.8 3" fill="none" stroke="#3b3b3b" stroke-width="0.8"/></svg>
<div style="left:18.5px;top:444.5px;width:866.5px;height:10.3px;background:#ececf3;"></div>
<div style="left:18.5px;top:445px;width:33px;height:9.6px;background:#fff;border:0.5px solid #c5cde8;box-sizing:border-box;"></div>
<span style="left:20px;top:445.00px;line-height:10px;font-size:6.2px;color:#1e1e1e;">100 %</span>
<span style="left:47px;top:445.00px;line-height:10px;font-size:5px;color:#1e1e1e;">▾</span>
<svg style="left:54px;top:446px;" width="8" height="9" viewBox="0 0 8 9"><circle cx="2.6" cy="2.6" r="1.8" fill="#2a2a2a"/><circle cx="5.6" cy="2.6" r="1.8" fill="#2a2a2a"/><rect x="1" y="3.6" width="6.2" height="4.4" rx="1.6" fill="#2a2a2a"/><circle cx="2.8" cy="5.6" r="0.8" fill="#fff"/><circle cx="5.4" cy="5.6" r="0.8" fill="#fff"/></svg>
<svg style="left:63px;top:446px;" width="8" height="9" viewBox="0 0 8 9"><path d="M5.6 0.8 L7.4 4 L6.2 8 L3 8 L1 5.6 L3 3 Z" fill="#a77be0"/><path d="M1 5.6 L4 4.6" stroke="#6a3fb0" stroke-width="0.8"/></svg>
<svg style="left:85.5px;top:446.5px;" width="7.5" height="7.5" viewBox="0 0 7.5 7.5"><circle cx="3.75" cy="3.75" r="3.4" fill="#1f8a2e"/><path d="M2 3.9 L3.3 5.2 L5.6 2.6" fill="none" stroke="#fff" stroke-width="0.9"/></svg>
<span style="left:95.5px;top:445.00px;line-height:10px;font-size:6.1px;color:#1e1e1e;">未找到相关问题</span>
<svg style="left:184px;top:446px;" width="9" height="9" viewBox="0 0 9 9"><path d="M7.6 0.8 L4 5.2" stroke="#3b3b3b" stroke-width="1"/><path d="M4.4 4.6 L2 5.4 L1.2 8 L4.2 7.2 L5 5.4 Z" fill="#c99a3c"/><path d="M2 1 L2.8 2.6 M1 2 L3.4 2" stroke="#c99a3c" stroke-width="0.6"/></svg>
<span style="left:194.5px;top:445.30px;line-height:10px;font-size:5px;color:#1e1e1e;">▾</span>
<span style="left:216px;top:445.30px;line-height:10px;font-size:5px;color:#c5cde8;">◂</span>
<span style="left:763px;top:445.30px;line-height:10px;font-size:5px;color:#c5cde8;">▸</span>
<span style="left:781px;top:445.30px;line-height:10px;font-size:6.3px;color:#1e1e1e;">行: 12</span>
<span style="left:808px;top:445.30px;line-height:10px;font-size:6.3px;color:#1e1e1e;">字符: 10</span>
<span style="left:840.5px;top:445.30px;line-height:10px;font-size:6.3px;color:#1e1e1e;">空格</span>
<span style="left:864px;top:445.30px;line-height:10px;font-size:6.3px;color:#1e1e1e;">CRLF</span>
<div style="left:889px;top:142px;width:172px;height:13px;background:#40568D;"></div>
<span style="left:892px;top:143.50px;line-height:10px;font-size:6.6px;color:#fff;">诊断工具</span>
<svg style="left:1031.4px;top:147.9px;" width="4.6" height="2.4" viewBox="0 0 4.6 2.4"><path d="M0 0 H4.6 L2.3 2.4 Z" fill="#b4bedf"/></svg>
<svg style="left:1040px;top:144.9px;" width="6" height="8" viewBox="0 0 6 8"><path d="M1.6 0.8 H4.2 V4 H1.6 Z M0.8 4 H5 M2.9 4 V7.2" fill="none" stroke="#94a1cc" stroke-width="0.7"/></svg>
<svg style="left:1050.4px;top:145.6px;" width="5.6" height="5.6" viewBox="0 0 5.6 5.6"><path d="M0.4 0.4 L5.2 5.2 M5.2 0.4 L0.4 5.2" stroke="#b4bedf" stroke-width="0.75"/></svg>
<div style="left:889px;top:155px;width:172px;height:15.5px;background:#CCD5F0;"></div>
<svg style="left:894px;top:158.5px;" width="10" height="10" viewBox="0 0 10 10"><circle cx="5" cy="5" r="2.3" fill="none" stroke="#1e1e1e" stroke-width="1.5"/><circle cx="5" cy="5" r="3.6" fill="none" stroke="#1e1e1e" stroke-width="1.2" stroke-dasharray="1.4 1.42"/></svg>
<div style="left:911px;top:158px;width:1px;height:10px;background:#aab3d3;"></div>
<svg style="left:914px;top:158.5px;" width="11" height="10" viewBox="0 0 11 10"><path d="M5 1 H1.6 V9 H7.6 V7.4" fill="none" stroke="#3b4468" stroke-width="0.8"/><path d="M3.4 4.6 H9.4 M7.4 2.6 L9.6 4.6 L7.4 6.6" fill="none" stroke="#1a66c8" stroke-width="1.1"/></svg>
<div style="left:931px;top:158px;width:1px;height:10px;background:#aab3d3;"></div>
<svg style="left:935px;top:158.5px;" width="10" height="10" viewBox="0 0 10 10"><circle cx="3.8" cy="3.8" r="2.6" fill="none" stroke="#3b4468" stroke-width="0.9"/><path d="M5.8 5.8 L9 9" stroke="#3b4468" stroke-width="1.1"/><path d="M2.6 3.8 H5 M3.8 2.6 V5" stroke="#1a66c8" stroke-width="0.7"/></svg>
<svg style="left:950.5px;top:158.5px;" width="10" height="10" viewBox="0 0 10 10"><circle cx="3.8" cy="3.8" r="2.6" fill="none" stroke="#3b4468" stroke-width="0.9"/><path d="M5.8 5.8 L9 9" stroke="#3b4468" stroke-width="1.1"/><path d="M2.6 3.8 H5" stroke="#1a66c8" stroke-width="0.7"/></svg>
<svg style="left:966px;top:158.5px;" width="10" height="10" viewBox="0 0 10 10"><path d="M1.6 9 V5 M4 9 V3 M6.4 9 V6 M8.6 9 V4.4" stroke="#aab3d3" stroke-width="1.2"/><path d="M1 1 L3.4 3" stroke="#aab3d3" stroke-width="0.8"/></svg>
<div style="left:889px;top:170.5px;width:172px;height:163.5px;background:#fff;"></div>
<span class="b" style="left:895px;top:171.80px;line-height:10px;font-size:7px;color:#1e1e1e;">诊断会话: 1:24 分钟</span>
<div style="left:889px;top:182.5px;width:172px;height:0.8px;background:#dcdcdc;"></div>
<div style="left:889px;top:195.2px;width:172px;height:0.8px;background:#dcdcdc;"></div>
<div style="left:907.5px;top:183px;width:2.6px;height:12.4px;background:#111;"></div>
<div style="left:1040.8px;top:183px;width:2.6px;height:12.4px;background:#111;"></div>
<div style="left:929.2px;top:183px;width:0.8px;height:12.4px;background:#b8b8b8;"></div>
<div style="left:1000.3px;top:183px;width:0.8px;height:12.4px;background:#b8b8b8;"></div>
<div style="left:914.98px;top:193.2px;width:0.6px;height:2px;background:#c8c8c8;"></div>
<div style="left:929.2px;top:193.2px;width:0.6px;height:2px;background:#c8c8c8;"></div>
<div style="left:943.4200000000001px;top:193.2px;width:0.6px;height:2px;background:#c8c8c8;"></div>
<div style="left:957.6400000000001px;top:193.2px;width:0.6px;height:2px;background:#c8c8c8;"></div>
<div style="left:971.86px;top:193.2px;width:0.6px;height:2px;background:#c8c8c8;"></div>
<div style="left:986.08px;top:193.2px;width:0.6px;height:2px;background:#c8c8c8;"></div>
<div style="left:1000.3000000000001px;top:193.2px;width:0.6px;height:2px;background:#c8c8c8;"></div>
<div style="left:1014.5200000000001px;top:193.2px;width:0.6px;height:2px;background:#c8c8c8;"></div>
<div style="left:1028.74px;top:193.2px;width:0.6px;height:2px;background:#c8c8c8;"></div>
<span style="left:931px;top:181.60px;line-height:10px;font-size:6.3px;color:#5a5a5a;">1:10分钟</span>
<span style="left:1002px;top:181.60px;line-height:10px;font-size:6.3px;color:#5a5a5a;">1:20分钟</span>
<svg style="left:894px;top:199.3px;" width="5" height="5" viewBox="0 0 5 5"><path d="M4.4 0.6 V4.4 H0.6 Z" fill="#5a5a5a"/></svg>
<span class="b" style="left:899px;top:196.30px;line-height:10px;font-size:7px;color:#1e1e1e;">事件</span>
<div style="left:909.7px;top:206.3px;width:131.2px;height:12.899999999999977px;background:#fff;border:0.8px solid #d0d0d0;box-sizing:border-box;"></div>
<div style="left:900px;top:211.3px;width:1.6px;height:5px;background:#2a2a2a;"></div>
<div style="left:903px;top:211.3px;width:1.6px;height:5px;background:#2a2a2a;"></div>
<svg style="left:894px;top:223.8px;" width="5" height="5" viewBox="0 0 5 5"><path d="M4.4 0.6 V4.4 H0.6 Z" fill="#5a5a5a"/></svg>
<span class="b" style="left:899px;top:220.80px;line-height:10px;font-size:7px;color:#1e1e1e;">进程内存 (MB)</span>
<svg style="left:957.5px;top:222.5px;" width="4" height="7" viewBox="0 0 4 7"><path d="M0.4 0.4 H3.6 V3.6 L2 6.6 L0.4 3.6 Z" fill="#f2a81d"/></svg>
<span style="left:964px;top:220.80px;line-height:10px;font-size:6.6px;color:#5a5a5a;">G</span>
<svg style="left:974.5px;top:223px;" width="6" height="6" viewBox="0 0 6 6"><path d="M0.2 0.6 H5.8 L3 5.6 Z" fill="#1a73c8"/></svg>
<span style="left:982.5px;top:220.80px;line-height:10px;font-size:6.6px;color:#5a5a5a;">快.</span>
<svg style="left:996px;top:222.8px;" width="6" height="6" viewBox="0 0 6 6"><circle cx="3" cy="3" r="2.8" fill="#7fb2d2"/></svg>
<span style="left:1003px;top:220.80px;line-height:10px;font-size:6.6px;color:#5a5a5a;">专...</span>
<div style="left:909.7px;top:232.5px;width:131.2px;height:39.30000000000001px;background:#fff;border:0.8px solid #d0d0d0;box-sizing:border-box;"></div>
<div style="left:910.2px;top:236.6px;width:122.8px;height:34.8px;background:#9fc6de;"></div>
<svg style="left:931.6999999999999px;top:233px;" width="3.2" height="5.4" viewBox="0 0 3.2 5.4"><path d="M0.2 0.2 H3 V2.8 L1.6 5.2 L0.2 2.8 Z" fill="#f2a81d"/></svg>
<svg style="left:958.4px;top:233px;" width="3.2" height="5.4" viewBox="0 0 3.2 5.4"><path d="M0.2 0.2 H3 V2.8 L1.6 5.2 L0.2 2.8 Z" fill="#f2a81d"/></svg>
<svg style="left:977.1999999999999px;top:233px;" width="3.2" height="5.4" viewBox="0 0 3.2 5.4"><path d="M0.2 0.2 H3 V2.8 L1.6 5.2 L0.2 2.8 Z" fill="#f2a81d"/></svg>
<svg style="left:988.9px;top:233px;" width="3.2" height="5.4" viewBox="0 0 3.2 5.4"><path d="M0.2 0.2 H3 V2.8 L1.6 5.2 L0.2 2.8 Z" fill="#f2a81d"/></svg>
<svg style="left:1007.4px;top:233px;" width="3.2" height="5.4" viewBox="0 0 3.2 5.4"><path d="M0.2 0.2 H3 V2.8 L1.6 5.2 L0.2 2.8 Z" fill="#f2a81d"/></svg>
<svg style="left:1012.9px;top:233px;" width="3.2" height="5.4" viewBox="0 0 3.2 5.4"><path d="M0.2 0.2 H3 V2.8 L1.6 5.2 L0.2 2.8 Z" fill="#f2a81d"/></svg>
<div style="left:929.2px;top:206.8px;width:0.8px;height:12px;background:#c4c4c4;"></div>
<div style="left:929.2px;top:233px;width:0.8px;height:38.4px;background:#86a9bf;"></div>
<div style="left:1000.3px;top:206.8px;width:0.8px;height:12px;background:#c4c4c4;"></div>
<div style="left:1000.3px;top:233px;width:0.8px;height:38.4px;background:#86a9bf;"></div>
<span style="left:887px;width:20px;text-align:right;top:231.8px;line-height:10px;font-size:6.6px;color:#3a3a3a;">219</span>
<span style="left:887px;width:20px;text-align:right;top:262.6px;line-height:10px;font-size:6.6px;color:#3a3a3a;">0</span>
<span style="left:1043.8px;top:231.80px;line-height:10px;font-size:6.6px;color:#3a3a3a;">219</span>
<span style="left:1044px;top:262.60px;line-height:10px;font-size:6.6px;color:#3a3a3a;">0</span>
<svg style="left:894px;top:275px;" width="5" height="5" viewBox="0 0 5 5"><path d="M4.4 0.6 V4.4 H0.6 Z" fill="#5a5a5a"/></svg>
<span class="b" style="left:899px;top:272.00px;line-height:10px;font-size:7px;color:#1e1e1e;">CPU (所有处理器的百分比)</span>
<div style="left:909.7px;top:282.3px;width:131.2px;height:38.89999999999998px;background:#fff;border:0.8px solid #d0d0d0;box-sizing:border-box;"></div>
<div style="left:929.2px;top:282.8px;width:0.8px;height:38px;background:#a9b4bd;"></div>
<div style="left:1000.3px;top:282.8px;width:0.8px;height:38px;background:#a9b4bd;"></div>
<span style="left:887px;width:20px;text-align:right;top:281.7px;line-height:10px;font-size:6.6px;color:#3a3a3a;">100</span>
<span style="left:887px;width:20px;text-align:right;top:312.3px;line-height:10px;font-size:6.6px;color:#3a3a3a;">0</span>
<span style="left:1043.8px;top:281.70px;line-height:10px;font-size:6.6px;color:#3a3a3a;">100</span>
<span style="left:1044px;top:312.30px;line-height:10px;font-size:6.6px;color:#3a3a3a;">0</span>
<svg style="left:910px;top:318px;" width="131" height="3" viewBox="0 0 131 3"><path d="M0 2.6 L10 2.4 L20 2.5 L30 2.3 L45 2.5 L60 2.4 L70 1.4 L74 2.4 L90 2.5 L100 2.3 L123 2.5 V3 H0 Z" fill="#9fc6de" stroke="#7fb2d2" stroke-width="0.3"/></svg>
<div style="left:889px;top:334px;width:172px;height:0.8px;background:#c5cde8;"></div>
<div style="left:889px;top:334.8px;width:172px;height:14.4px;background:#fff;"></div>
<div style="left:932px;top:337.6px;width:40px;height:11.6px;background:#CCD5F0;"></div>
<span style="left:895px;top:338.50px;line-height:10px;font-size:6.8px;color:#1e1e1e;">摘要</span>
<span style="left:915px;top:338.50px;line-height:10px;font-size:6.8px;color:#1e1e1e;">事件</span>
<span style="left:935.5px;top:338.50px;line-height:10px;font-size:6.8px;color:#1e1e1e;">内存使用率</span>
<span style="left:976px;top:338.50px;line-height:10px;font-size:6.8px;color:#1e1e1e;">CPU 使用率</span>
<div style="left:889px;top:349.2px;width:172px;height:15.3px;background:#dfe5f6;"></div>
<div style="left:890px;top:351px;width:48px;height:11.8px;background:#CCD5F0;"></div>
<svg style="left:892.5px;top:352.5px;" width="9" height="8" viewBox="0 0 9 8"><path d="M0.6 2 H2.4 L3.2 0.8 H5.8 L6.6 2 H8.4 V7.2 H0.6 Z" fill="none" stroke="#3b4468" stroke-width="0.8"/><circle cx="4.5" cy="4.4" r="1.6" fill="none" stroke="#1a66c8" stroke-width="0.8"/></svg>
<span style="left:903.3px;top:352.00px;line-height:10px;font-size:6.8px;color:#1e1e1e;">截取快照</span>
<div style="left:938.5px;top:351px;width:33.5px;height:11.8px;background:#d3daf1;"></div>
<svg style="left:941px;top:353px;" width="7" height="7" viewBox="0 0 7 7"><circle cx="4" cy="2.8" r="2" fill="none" stroke="#aab3d3" stroke-width="0.8"/><path d="M2.6 4.2 L0.8 6.4" stroke="#aab3d3" stroke-width="0.9"/></svg>
<span style="left:949.5px;top:352.00px;line-height:10px;font-size:6.8px;color:#a4acc4;">查看堆</span>
<div style="left:976px;top:351px;width:28.5px;height:11.8px;background:#d3daf1;"></div>
<svg style="left:979px;top:353.5px;" width="6" height="6" viewBox="0 0 6 6"><path d="M0.6 0.6 L5.4 5.4 M5.4 0.6 L0.6 5.4" stroke="#aab3d3" stroke-width="0.9"/></svg>
<span style="left:987.5px;top:352.00px;line-height:10px;font-size:6.8px;color:#a4acc4;">删除</span>
<div style="left:889px;top:364.5px;width:172px;height:90.5px;background:#fff;"></div>
<div style="left:903.3px;top:365px;width:0.7px;height:14.5px;background:#d8d8e0;"></div>
<div style="left:921.5px;top:365px;width:0.7px;height:14.5px;background:#d8d8e0;"></div>
<div style="left:958.2px;top:365px;width:0.7px;height:14.5px;background:#d8d8e0;"></div>
<div style="left:1001px;top:365px;width:0.7px;height:14.5px;background:#d8d8e0;"></div>
<div style="left:889px;top:379.6px;width:172px;height:0.7px;background:#e2e2ea;"></div>
<span style="left:891.5px;top:367.80px;line-height:10px;font-size:6.6px;color:#1e1e1e;">ID</span>
<span style="left:905.5px;top:367.80px;line-height:10px;font-size:6.6px;color:#1e1e1e;">时间</span>
<span style="left:924px;top:367.80px;line-height:10px;font-size:6.6px;color:#1e1e1e;">对象(差异)</span>
<span style="left:961px;top:367.80px;line-height:10px;font-size:6.6px;color:#1e1e1e;">堆大小(差异)</span>
<div style="left:18.5px;top:460px;width:516.5px;height:12.5px;background:#40568D;"></div>
<span style="left:21.2px;top:461.30px;line-height:10px;font-size:6.6px;color:#fff;">自动窗口</span>
<svg style="left:505.4px;top:465.70000000000005px;" width="4.6" height="2.4" viewBox="0 0 4.6 2.4"><path d="M0 0 H4.6 L2.3 2.4 Z" fill="#b4bedf"/></svg>
<svg style="left:514px;top:462.7px;" width="6" height="8" viewBox="0 0 6 8"><path d="M1.6 0.8 H4.2 V4 H1.6 Z M0.8 4 H5 M2.9 4 V7.2" fill="none" stroke="#94a1cc" stroke-width="0.7"/></svg>
<svg style="left:524.4px;top:463.40000000000003px;" width="5.6" height="5.6" viewBox="0 0 5.6 5.6"><path d="M0.4 0.4 L5.2 5.2 M5.2 0.4 L0.4 5.2" stroke="#b4bedf" stroke-width="0.75"/></svg>
<div style="left:18.5px;top:472.3px;width:516.5px;height:13.7px;background:#CCD5F0;"></div>
<div style="left:18.5px;top:472.5px;width:125.5px;height:12.5px;background:#fff;border:0.6px solid #b9c1de;box-sizing:border-box;"></div>
<span style="left:21.2px;top:474.00px;line-height:10px;font-size:6.9px;color:#6a6a6a;">搜索(Ctrl+E)</span>
<svg style="left:129px;top:475px;" width="8" height="8" viewBox="0 0 8 8"><circle cx="4.8" cy="3" r="2.2" fill="none" stroke="#3b3b3b" stroke-width="0.9"/><path d="M3.2 4.6 L0.8 7" stroke="#3b3b3b" stroke-width="1"/></svg>
<div style="left:138.5px;top:473px;width:0.6px;height:11.5px;background:#c5cde8;"></div>
<span style="left:139.5px;top:474.00px;line-height:10px;font-size:5px;color:#1e1e1e;">▾</span>
<span style="left:148px;top:473.60px;line-height:10px;font-size:7px;color:#b3bbd8;">←</span>
<span style="left:161px;top:473.60px;line-height:10px;font-size:7px;color:#b3bbd8;">→</span>
<span style="left:174px;top:474.20px;line-height:10px;font-size:6.6px;color:#858ca8;">搜索深度:</span>
<div style="left:206px;top:473.5px;width:22px;height:11px;background:#e3e7f4;border:1px solid #b9c1de;box-sizing:border-box;"></div>
<span style="left:220px;top:474.00px;line-height:10px;font-size:5px;color:#8088a4;">▾</span>
<div style="left:18.5px;top:486px;width:516.5px;height:68.5px;background:#fff;"></div>
<div style="left:22px;top:498.6px;width:509px;height:0.6px;background:#ececf2;"></div>
<span style="left:27px;top:487.80px;line-height:10px;font-size:6.4px;color:#a8a8a8;">名称</span>
<span style="left:194.3px;top:487.80px;line-height:10px;font-size:6.4px;color:#a8a8a8;">值</span>
<span style="left:446px;top:487.80px;line-height:10px;font-size:6.4px;color:#a8a8a8;">类型</span>
<div style="left:527px;top:486px;width:8px;height:68px;background:#f4f5f9;"></div>
<span style="left:529px;top:486.00px;line-height:10px;font-size:4.5px;color:#c0c4d0;">▴</span>
<span style="left:529px;top:544.50px;line-height:10px;font-size:4.5px;color:#c0c4d0;">▾</span>
<div style="left:18.5px;top:554.5px;width:33px;height:12.5px;background:#fff;"></div>
<span style="left:21.3px;top:556.00px;line-height:10px;font-size:6.75px;color:#1e1e1e;">自动窗口</span>
<div style="left:52px;top:555.3px;width:32.5px;height:11px;background:#40568D;"></div>
<span style="left:54.8px;top:556.00px;line-height:10px;font-size:6.75px;color:#fff;">局部变量</span>
<div style="left:85.6px;top:555.3px;width:25.4px;height:11px;background:#40568D;"></div>
<span style="left:88.39999999999999px;top:556.00px;line-height:10px;font-size:6.75px;color:#fff;">监视 1</span>
<div style="left:540px;top:460px;width:521px;height:12.3px;background:#40568D;"></div>
<span style="left:543px;top:461.30px;line-height:10px;font-size:6.6px;color:#fff;">错误列表</span>
<svg style="left:1031.4px;top:465.70000000000005px;" width="4.6" height="2.4" viewBox="0 0 4.6 2.4"><path d="M0 0 H4.6 L2.3 2.4 Z" fill="#b4bedf"/></svg>
<svg style="left:1040px;top:462.7px;" width="6" height="8" viewBox="0 0 6 8"><path d="M1.6 0.8 H4.2 V4 H1.6 Z M0.8 4 H5 M2.9 4 V7.2" fill="none" stroke="#94a1cc" stroke-width="0.7"/></svg>
<svg style="left:1050.4px;top:463.40000000000003px;" width="5.6" height="5.6" viewBox="0 0 5.6 5.6"><path d="M0.4 0.4 L5.2 5.2 M5.2 0.4 L0.4 5.2" stroke="#b4bedf" stroke-width="0.75"/></svg>
<div style="left:540px;top:472.3px;width:521px;height:14px;background:#CCD5F0;"></div>
<div style="left:544.5px;top:474.3px;width:84.5px;height:11px;background:#fff;border:1px solid #b9c1de;box-sizing:border-box;"></div>
<span style="left:621.0px;top:474.80px;line-height:10px;font-size:5px;color:#1e1e1e;">▾</span>
<span style="left:547px;top:474.90px;line-height:10px;font-size:6.65px;color:#1e1e1e;">整个解决方案</span>
<div style="left:632px;top:475px;width:1px;height:10px;background:#aab3d3;"></div>
<div style="left:635px;top:474px;width:37.3px;height:11.6px;background:#fdf1cc;border:0.7px solid #e5c365;box-sizing:border-box;"></div>
<svg style="left:637.5px;top:476px;" width="7.6" height="7.6" viewBox="0 0 7.6 7.6"><circle cx="3.8" cy="3.8" r="3.5" fill="#d4242c"/><path d="M2.5 2.5 L5.1 5.1 M5.1 2.5 L2.5 5.1" stroke="#fff" stroke-width="1"/></svg>
<span style="left:648px;top:474.90px;line-height:10px;font-size:6.8px;color:#1e1e1e;">错误 0</span>
<div style="left:676px;top:474px;width:87px;height:11.6px;background:#dbe1f5;"></div>
<svg style="left:678.5px;top:476px;" width="8" height="7.6" viewBox="0 0 8 7.6"><path d="M4 0.5 L7.7 7.2 H0.3 Z" fill="#b8860b"/><path d="M4 2.8 V5 M4 5.7 V6.5" stroke="#fff" stroke-width="0.8"/></svg>
<span style="left:689.5px;top:474.90px;line-height:10px;font-size:6.8px;color:#1e1e1e;word-spacing:0.6px;">展示 1 个警告中的 0 个</span>
<div style="left:766px;top:474px;width:93px;height:11.6px;background:#dbe1f5;"></div>
<svg style="left:771.5px;top:476px;" width="7.6" height="7.6" viewBox="0 0 7.6 7.6"><circle cx="3.8" cy="3.8" r="3.5" fill="#1a5fb4"/><path d="M3.8 3.3 V5.9 M3.8 1.7 V2.5" stroke="#fff" stroke-width="1"/></svg>
<span style="left:782.5px;top:474.90px;line-height:10px;font-size:6.8px;color:#1e1e1e;word-spacing:0.6px;">展示 10 个消息中的 0 个</span>
<div style="left:862px;top:475px;width:1px;height:10px;background:#aab3d3;"></div>
<div style="left:866px;top:474px;width:14px;height:11.6px;background:#fdf1cc;border:0.7px solid #e5c365;box-sizing:border-box;"></div>
<svg style="left:868.5px;top:475.5px;" width="9" height="9" viewBox="0 0 9 9"><path d="M3.6 4 H8.4 L6.6 6.2 V8.4 L5.4 7.6 V6.2 Z" fill="none" stroke="#3b3b3b" stroke-width="0.8"/><circle cx="2.4" cy="2.4" r="1.9" fill="#d4242c"/></svg>
<div style="left:885px;top:474.3px;width:86px;height:11px;background:#fff;border:1px solid #b9c1de;box-sizing:border-box;"></div>
<span style="left:963px;top:474.80px;line-height:10px;font-size:5px;color:#1e1e1e;">▾</span>
<span style="left:888px;top:474.90px;line-height:10px;font-size:6.9px;color:#1e1e1e;">生成 + IntelliSense</span>
<div style="left:973.7px;top:474.3px;width:80px;height:11px;background:#fff;border:0.6px solid #b9c1de;box-sizing:border-box;"></div>
<span style="left:976.5px;top:474.90px;line-height:10px;font-size:6.4px;color:#8a8a8a;">搜索错误列表</span>
<svg style="left:1043.5px;top:476px;" width="8" height="8" viewBox="0 0 8 8"><circle cx="4.8" cy="3" r="2.2" fill="none" stroke="#3b3b3b" stroke-width="0.9"/><path d="M3.2 4.6 L0.8 7" stroke="#3b3b3b" stroke-width="1"/></svg>
<svg style="left:1055.7px;top:479.2px;" width="3.6" height="2" viewBox="0 0 3.6 2"><path d="M0 0 H3.6 L1.8 2 Z" fill="#1e1e1e"/></svg>
<div style="left:540px;top:486.3px;width:521px;height:68.2px;background:#fff;"></div>
<div style="left:540px;top:499.4px;width:521px;height:0.6px;background:#e2e2ea;"></div>
<div style="left:555.5px;top:487px;width:0.6px;height:12px;background:#e2e2ea;"></div>
<div style="left:570px;top:487px;width:0.6px;height:12px;background:#e2e2ea;"></div>
<div style="left:598.7px;top:487px;width:0.6px;height:12px;background:#e2e2ea;"></div>
<div style="left:788.5px;top:487px;width:0.6px;height:12px;background:#e2e2ea;"></div>
<div style="left:872.5px;top:487px;width:0.6px;height:12px;background:#e2e2ea;"></div>
<div style="left:957.5px;top:487px;width:0.6px;height:12px;background:#e2e2ea;"></div>
<div style="left:977px;top:487px;width:0.6px;height:12px;background:#e2e2ea;"></div>
<div style="left:1047.5px;top:487px;width:0.6px;height:12px;background:#e2e2ea;"></div>
<svg style="left:563.5px;top:488.6px;" width="4" height="4" viewBox="0 0 4 4"><path d="M0.2 0.2 H3.8 V3.8 Z" fill="#7a7a7a"/></svg>
<span style="left:572.5px;top:488.60px;line-height:10px;font-size:6.6px;color:#1e1e1e;">代码</span>
<span style="left:600.7px;top:488.60px;line-height:10px;font-size:6.6px;color:#1e1e1e;">说明</span>
<svg style="left:619.3px;top:492.0px;" width="4.4" height="2.4" viewBox="0 0 4.4 2.4"><path d="M0 0 H4.4 L2.2 2.4 Z" fill="#1e1e1e"/></svg>
<span style="left:791px;top:488.60px;line-height:10px;font-size:6.6px;color:#1e1e1e;">项目</span>
<span style="left:875.5px;top:488.60px;line-height:10px;font-size:6.6px;color:#1e1e1e;">文件</span>
<span style="left:960px;top:488.60px;line-height:10px;font-size:6.6px;color:#1e1e1e;">行</span>
<span style="left:980px;top:488.60px;line-height:10px;font-size:6.6px;color:#1e1e1e;">禁止显示状态</span>
<div style="left:540.6px;top:555.3px;width:52.2px;height:11px;background:#40568D;"></div>
<span style="left:543.4px;top:556.00px;line-height:10px;font-size:6.75px;color:#fff;">辅助功能检查器</span>
<div style="left:594.5px;top:555.3px;width:53.3px;height:11px;background:#40568D;"></div>
<span style="left:597.3px;top:556.00px;line-height:10px;font-size:6.75px;color:#fff;">XAML 绑定失败</span>
<div style="left:650.2px;top:555.3px;width:32px;height:11px;background:#40568D;"></div>
<span style="left:653.0px;top:556.00px;line-height:10px;font-size:6.75px;color:#fff;">调用堆栈</span>
<div style="left:684px;top:555.3px;width:19px;height:11px;background:#40568D;"></div>
<span style="left:686.8px;top:556.00px;line-height:10px;font-size:6.75px;color:#fff;">断点</span>
<div style="left:704.6px;top:555.3px;width:32px;height:11px;background:#40568D;"></div>
<span style="left:707.4px;top:556.00px;line-height:10px;font-size:6.75px;color:#fff;">异常设置</span>
<div style="left:738.2px;top:555.3px;width:32px;height:11px;background:#40568D;"></div>
<span style="left:741.0px;top:556.00px;line-height:10px;font-size:6.75px;color:#fff;">命令窗口</span>
<div style="left:771.8px;top:555.3px;width:31.5px;height:11px;background:#40568D;"></div>
<span style="left:774.5999999999999px;top:556.00px;line-height:10px;font-size:6.75px;color:#fff;">即时窗口</span>
<div style="left:804.8px;top:555.3px;width:19px;height:11px;background:#40568D;"></div>
<span style="left:807.5999999999999px;top:556.00px;line-height:10px;font-size:6.75px;color:#fff;">输出</span>
<div style="left:825px;top:554.5px;width:33.6px;height:12.5px;background:#fff;"></div>
<span style="left:827.8px;top:556.00px;line-height:10px;font-size:6.75px;color:#1e1e1e;">错误列表</span>
<div style="left:0px;top:570.6px;width:1080px;height:14.4px;background:#A34A3D;"></div>
<svg style="left:1.8px;top:573px;" width="10.5" height="9.5" viewBox="0 0 10.5 9.5"><path d="M0.8 0.8 H9.6 V6.4 H5.6 L3.6 8.6 V6.4 H0.8 Z" fill="none" stroke="#f4dcd8" stroke-width="0.9"/></svg>
<span style="left:16.2px;top:573.00px;line-height:10px;font-size:6.6px;color:#fff;">就绪</span>
<svg style="left:884px;top:573.5px;" width="8" height="9" viewBox="0 0 8 9"><path d="M2 8 V1.2 M0.6 2.8 L2 1 L3.4 2.8 M6 1 V7.8 M4.6 6.2 L6 8 L7.4 6.2" fill="none" stroke="#fff" stroke-width="0.9"/></svg>
<span style="left:896px;top:573.00px;line-height:10px;font-size:7.2px;color:#fff;">0 / 0</span>
<svg style="left:916.2px;top:576.8px;" width="4.6" height="2.4" viewBox="0 0 4.6 2.4"><path d="M0 2.4 L2.3 0 L4.6 2.4 Z" fill="#fff"/></svg>
<svg style="left:932px;top:573.5px;" width="8.5" height="8.5" viewBox="0 0 8.5 8.5"><path d="M1 7.6 L1.6 5.4 L6 1 L7.6 2.6 L3.2 7 Z M5 2 L6.6 3.6" fill="none" stroke="#fff" stroke-width="0.8"/></svg>
<span style="left:945px;top:573.00px;line-height:10px;font-size:7.2px;color:#fff;">1</span>
<svg style="left:961px;top:573px;" width="8" height="10" viewBox="0 0 8 10"><circle cx="2" cy="1.9" r="1.2" fill="none" stroke="#fff" stroke-width="0.7"/><circle cx="2" cy="8" r="1.2" fill="none" stroke="#fff" stroke-width="0.7"/><circle cx="6" cy="2.6" r="1.2" fill="none" stroke="#fff" stroke-width="0.7"/><path d="M2 3.1 V6.8 M6 3.8 C6 5.6 2 5.2 2 6.8" fill="none" stroke="#fff" stroke-width="0.7"/></svg>
<span style="left:972.7px;top:573.00px;line-height:10px;font-size:7.2px;color:#fff;">main</span>
<svg style="left:993.2px;top:576.8px;" width="4.6" height="2.4" viewBox="0 0 4.6 2.4"><path d="M0 2.4 L2.3 0 L4.6 2.4 Z" fill="#fff"/></svg>
<svg style="left:1012px;top:573px;" width="10" height="10" viewBox="0 0 10 10"><path d="M1 1 H8.4 M1 2.6 H8.4 M2 2.6 V7.6 H5 M7.4 2.6 V4.4" fill="none" stroke="#fff" stroke-width="0.8"/><circle cx="6.8" cy="7" r="1.7" fill="#fff"/><circle cx="6.8" cy="7" r="0.6" fill="#A34A3D"/></svg>
<span style="left:1024px;top:573.00px;line-height:10px;font-size:7.2px;color:#fff;">VPet</span>
<svg style="left:1043.7px;top:576.8px;" width="4.6" height="2.4" viewBox="0 0 4.6 2.4"><path d="M0 2.4 L2.3 0 L4.6 2.4 Z" fill="#fff"/></svg>
<svg style="left:1059.5px;top:572.5px;" width="11" height="11" viewBox="0 0 11 11"><path d="M4.6 1 C2.6 1 2.2 2.8 2.2 4.6 L1.2 7 H5.4 M3.6 8.2 H5" fill="none" stroke="#fff" stroke-width="0.8"/><path d="M4.6 1 C6.2 1 6.8 2.4 6.9 3.8" fill="none" stroke="#fff" stroke-width="0.8"/><circle cx="7.6" cy="7" r="2.1" fill="#fff"/><path d="M7.6 5.8 V7.2 M7.6 7.8 V8.3" stroke="#A34A3D" stroke-width="0.6"/></svg>
<svg style="left:146px;top:86px;" width="40" height="20" viewBox="0 0 40 20"><path d="M5.6 9 C4.4 13.8 6.4 15.4 11 15.2 C15 15 18 15 21.4 16.4" fill="none" stroke="#6e6e70" stroke-width="3.6"/><path d="M5.6 9 C4.4 13.8 6.4 15.4 11 15.2 C15 15 18 15 21.4 16.4" fill="none" stroke="#c6c6c8" stroke-width="2.2"/><rect x="2.4" y="1.8" width="19.6" height="7" fill="#d9def5" stroke="#5a65a8" stroke-width="1"/><rect x="5.4" y="4.3" width="14" height="2.1" fill="#7f8cc8"/></svg>
<svg style="left:133px;top:120px;" width="52" height="18" viewBox="0 0 52 18"><path d="M1 18 V5 C1 3 4 2 8 2 H43 C47 2 50 3 50 6 V18 Z" fill="#b6b6b8" stroke="#5a5a5c" stroke-width="1"/>
<path d="M9 18 V5 C14 2.6 37 2.6 41 5 V18 Z" fill="#fbf1ec"/>
<path d="M9 18 V3 L13.4 10 L11 18 Z M41 18 V3 L36.6 9 L39 18 Z" fill="#a9a9ab" stroke="#6a6a6c" stroke-width="0.5"/>
<path d="M18 2.6 L24 10 L23 4 L27 8 L29 2.6 Z" fill="#b0b0b2" stroke="#6a6a6c" stroke-width="0.5"/>
<path d="M3 18 L4 8 M6.4 18 L6 7 M45 18 L46 9 M48 18 V8" stroke="#7a7a7c" stroke-width="0.6"/>
<path d="M42.6 2 H50 V7 H43.4 Z" fill="#9b5a2a" stroke="#5a3214" stroke-width="0.6"/>
<ellipse cx="15.4" cy="9" rx="2.5" ry="3.4" fill="#f6b31e" stroke="#7a3a1a" stroke-width="1"/>
<ellipse cx="31" cy="7.5" rx="2.5" ry="3.4" fill="#f6b31e" stroke="#7a3a1a" stroke-width="1"/>
<ellipse cx="15.4" cy="9.6" rx="1.2" ry="1.8" fill="#fde9a8"/><ellipse cx="31" cy="8.2" rx="1.2" ry="1.8" fill="#fde9a8"/>
<path d="M11 4.6 L19 5.6 M27 4.4 L35 3.2" stroke="#d8562a" stroke-width="1"/>
<path d="M20.4 15 C22 13.4 26 13.6 27.6 15.6 L24 17.4 Z" fill="#c8202c"/>
<path d="M26 12 L30 14.6 L34 13.6 M18 12.4 L20.6 13.6" fill="none" stroke="#6a6a6c" stroke-width="0.8"/></svg>
<div style="left:89.5px;top:102px;width:137.5px;height:20.4px;background:#b3e3fb;border:1px solid #7fd0f7;border-radius:2px;box-sizing:border-box;"></div>
<div style="left:92.5px;top:105px;width:104px;height:11.4px;background:#fff;border:0.6px solid #9ad4f3;box-sizing:border-box;"></div>
<span style="left:95.3px;top:105.80px;line-height:10px;font-size:9.2px;color:#dcdfe2;">Said with desktop pet</span>
<div style="left:198.5px;top:105px;width:25.5px;height:11.4px;background:#c4e2f8;border:0.8px solid #8fc4ea;box-sizing:border-box;"></div>
<span style="left:200.7px;top:105.80px;line-height:10px;font-size:9.1px;color:#3e4a56;">Send</span>
<div style="left:92.5px;top:116.4px;width:131.5px;height:3.4px;background:#53b6ee;"></div>
<div style="left:88px;top:136.3px;width:139.8px;height:92.4px;background:#fff;border:1px solid #bfe1f4;box-sizing:border-box;"></div>
<span style="left:92.3px;top:141.20px;line-height:10px;font-size:7.4px;color:#55b6ea;">Lv 7</span>
<span style="left:92px;top:157.30px;line-height:10px;font-size:7.3px;color:#4e4e4e;">Money</span>
<span style="left:92px;top:165.80px;line-height:10px;font-size:7.3px;color:#4e4e4e;">EXP</span>
<span style="left:92px;top:174.00px;line-height:10px;font-size:7.3px;color:#4e4e4e;">Stamina</span>
<span style="left:92px;top:182.50px;line-height:10px;font-size:7.3px;color:#4e4e4e;">Mood</span>
<span style="left:92px;top:190.90px;line-height:10px;font-size:7.3px;color:#4e4e4e;">Hunger</span>
<span style="left:92px;top:199.20px;line-height:10px;font-size:7.3px;color:#4e4e4e;">Thirst</span>
<span style="left:120.4px;top:157.30px;line-height:10px;font-size:7.2px;color:#3aa7e6;">$ 82,453.15</span>
<div style="left:120.4px;top:167.9px;width:80.2px;height:5px;background:#e8e8e8;border-radius:2.5px;"></div>
<div style="left:120.4px;top:167.9px;width:63.599999999999994px;height:5px;background:#2196e8;border-radius:2.5px;"></div>
<span style="left:120.4px;width:81px;text-align:center;top:165.9px;line-height:9px;font-size:6.3px;color:#fff;">5877.78 / 4900</span>
<span style="left:193.7px;width:30px;text-align:right;top:165.90px;line-height:10px;font-size:7.6px;color:#3aa7e6;">x1.0</span>
<div style="left:120.4px;top:176.2px;width:80.2px;height:5px;background:#e8e8e8;border-radius:2.5px;"></div>
<div style="left:120.4px;top:176.2px;width:70.0px;height:5px;background:#2196e8;border-radius:2.5px;"></div>
<span style="left:120.4px;width:81px;text-align:center;top:174.2px;line-height:9px;font-size:6.3px;color:#fff;">86.95 / 100</span>
<span style="left:193.7px;width:30px;text-align:right;top:174.20px;line-height:10px;font-size:7.6px;color:#3aa7e6;">0.22/t</span>
<div style="left:120.4px;top:184.7px;width:80.2px;height:5px;background:#e8e8e8;border-radius:2.5px;"></div>
<div style="left:120.4px;top:184.7px;width:80.19999999999999px;height:5px;background:#a3cf6c;border-radius:2.5px;"></div>
<span style="left:120.4px;width:81px;text-align:center;top:182.7px;line-height:9px;font-size:6.3px;color:#fff;">99.71 / 100</span>
<span style="left:193.7px;width:30px;text-align:right;top:182.70px;line-height:10px;font-size:7.6px;color:#3aa7e6;">-0.05/t</span>
<div style="left:120.4px;top:193.1px;width:80.2px;height:5px;background:#e8e8e8;border-radius:2.5px;"></div>
<div style="left:120.4px;top:193.1px;width:66.1px;height:5px;background:#a3cf6c;border-radius:2.5px;"></div>
<span style="left:120.4px;width:81px;text-align:center;top:191.1px;line-height:9px;font-size:6.3px;color:#fff;">81.76 / 100</span>
<span style="left:193.7px;width:30px;text-align:right;top:191.10px;line-height:10px;font-size:7.6px;color:#3aa7e6;">-0.19/t</span>
<div style="left:120.4px;top:201.4px;width:80.2px;height:5px;background:#e8e8e8;border-radius:2.5px;"></div>
<div style="left:120.4px;top:201.4px;width:80.19999999999999px;height:5px;background:#a3cf6c;border-radius:2.5px;"></div>
<span style="left:120.4px;width:81px;text-align:center;top:199.4px;line-height:9px;font-size:6.3px;color:#fff;">99.90 / 100</span>
<span style="left:193.7px;width:30px;text-align:right;top:199.40px;line-height:10px;font-size:7.6px;color:#3aa7e6;">0.51/t</span>
<div style="left:88.5px;top:212.6px;width:138.8px;height:1px;background:#a9d9f2;"></div>
<div style="left:116.4px;top:213.6px;width:27.4px;height:14.4px;background:#cfe6f9;"></div>
<span style="left:82px;width:40px;text-align:center;top:217px;line-height:10px;font-size:7.6px;color:#5a5a5a;">Feed</span>
<span style="left:110px;width:40px;text-align:center;top:217px;line-height:10px;font-size:7.6px;color:#3c9fe0;">Panel</span>
<span style="left:138px;width:40px;text-align:center;top:217px;line-height:10px;font-size:7.6px;color:#5a5a5a;">Interact</span>
<span style="left:166px;width:40px;text-align:center;top:217px;line-height:10px;font-size:7.6px;color:#5a5a5a;">DIY</span>
<span style="left:193.8px;width:40px;text-align:center;top:217px;line-height:10px;font-size:7.6px;color:#5a5a5a;">System</span>
</div></body></html>
